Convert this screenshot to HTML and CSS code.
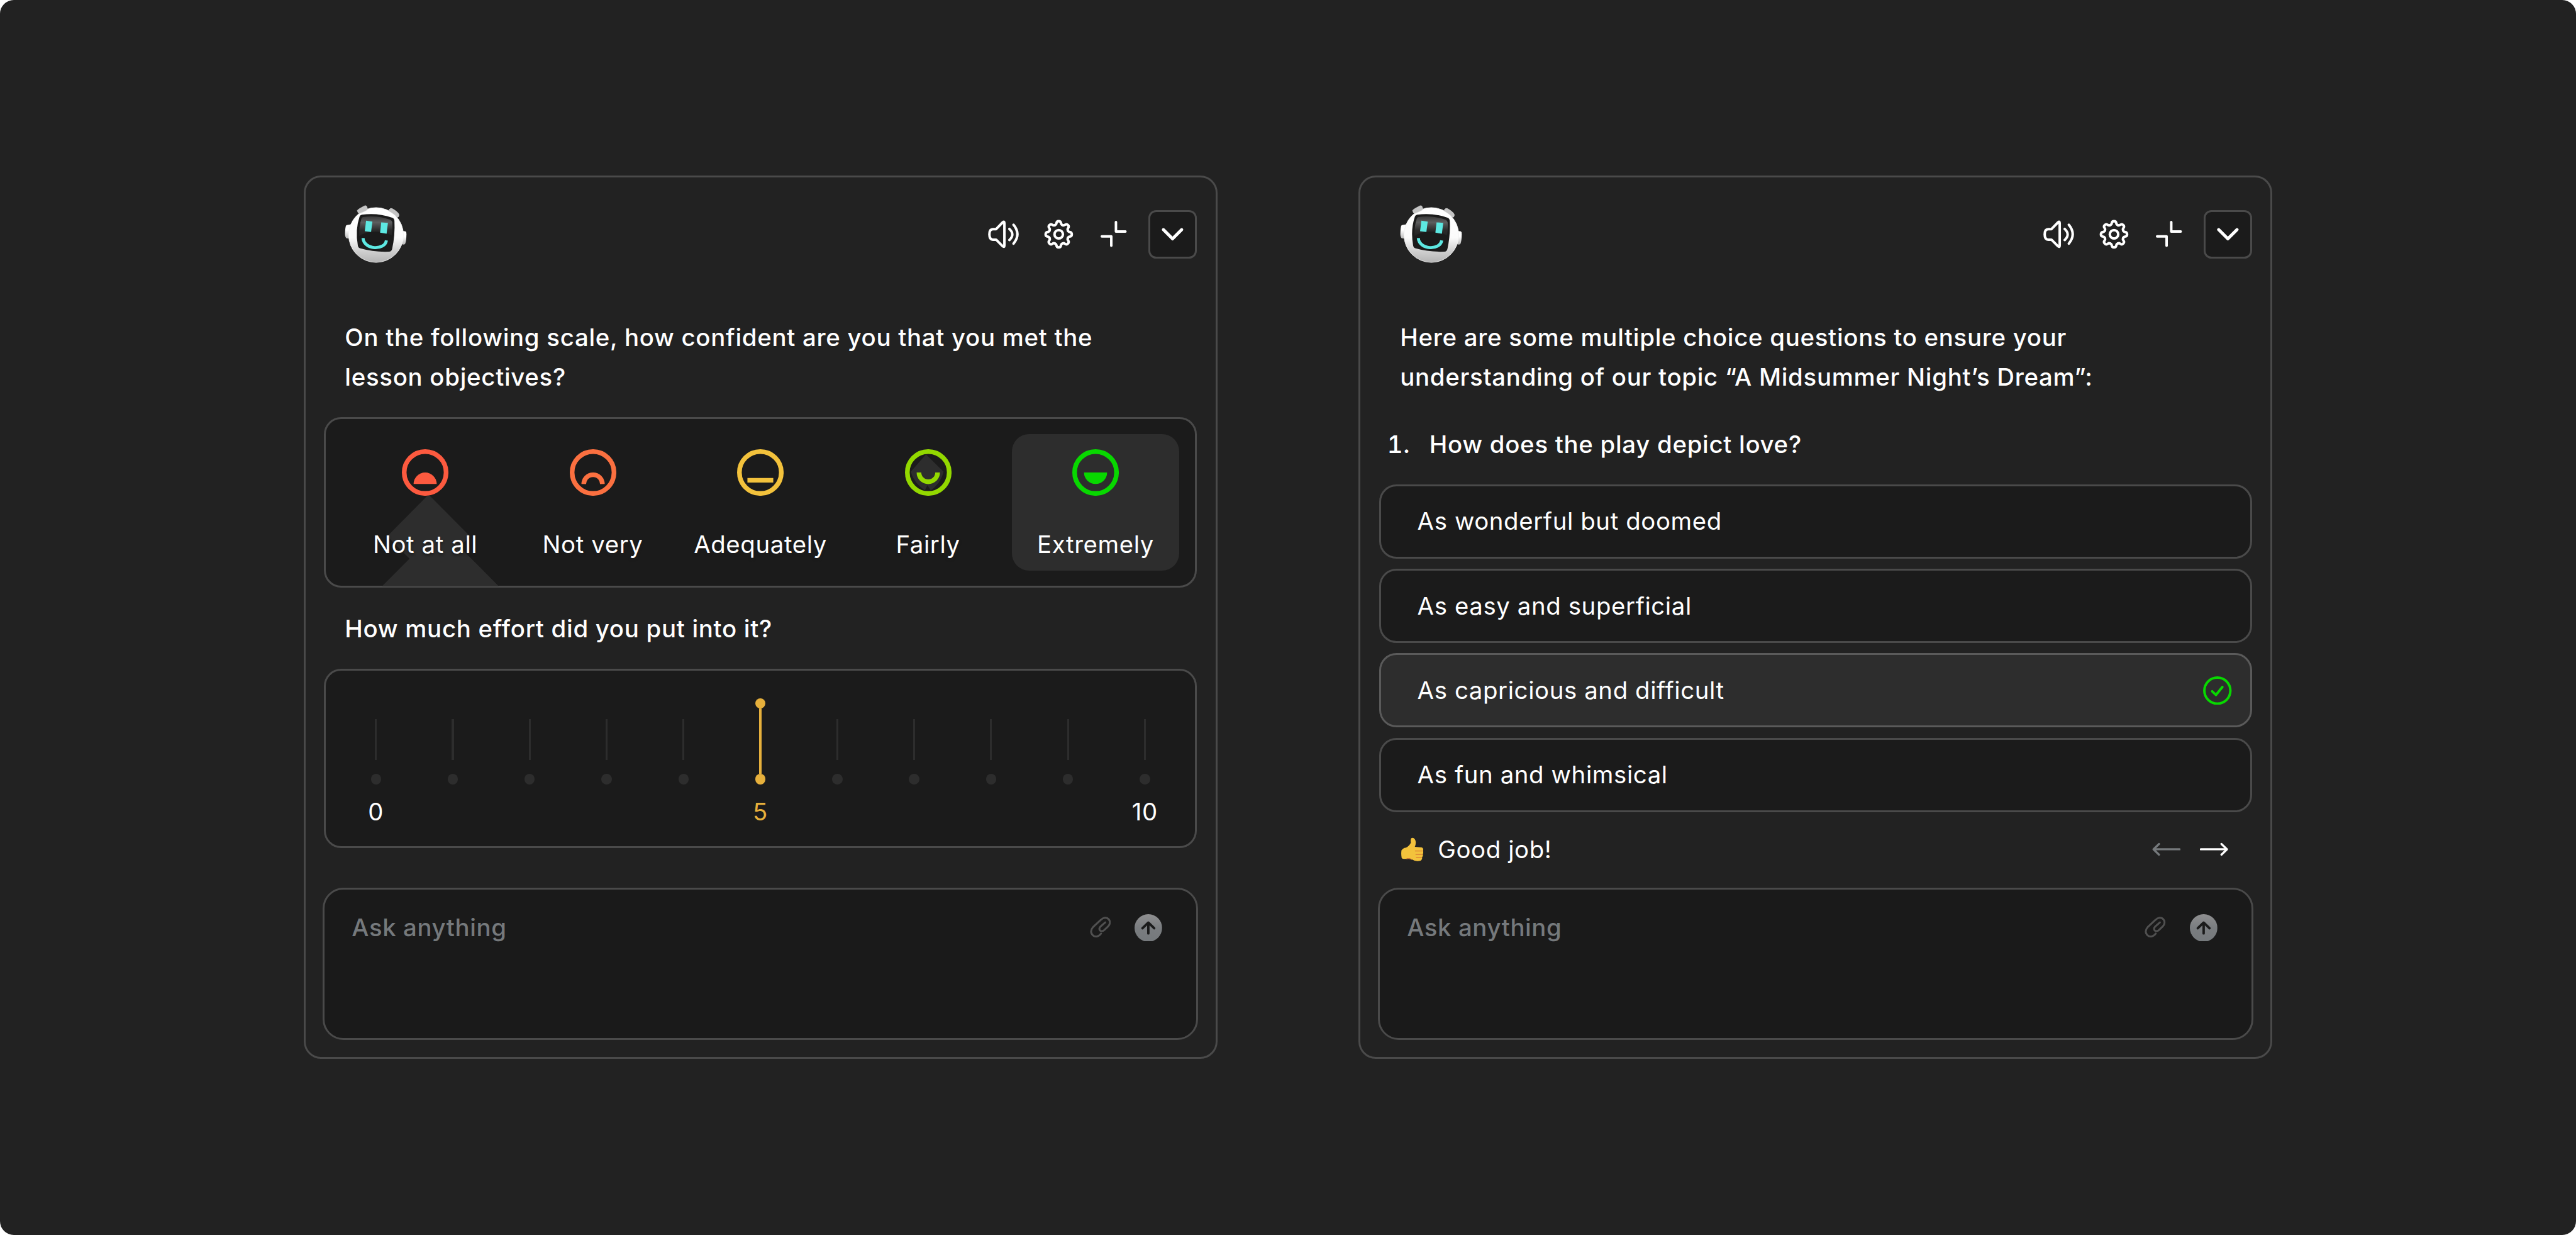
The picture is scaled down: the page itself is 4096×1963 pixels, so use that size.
FILE: index.html
```html
<!DOCTYPE html>
<html lang="en">
<head>
    <meta charset="UTF-8">
    <meta name="viewport" content="width=device-width, initial-scale=1.0">
    <title>Lesson Assistant</title>
    <link rel="stylesheet" href="styles.css">
</head>
<body>
    <!-- Shared icons -->
    <svg class="sprite" aria-hidden="true">
        <defs>
            <linearGradient id="headFill" x1="0" y1="0" x2="0" y2="1">
                <stop offset="0" stop-color="#ffffff"/>
                <stop offset="0.55" stop-color="#fbfbfb"/>
                <stop offset="0.8" stop-color="#cfcfcf"/>
                <stop offset="1" stop-color="#b4b4b4"/>
            </linearGradient>
            <linearGradient id="earFill" x1="0" y1="0" x2="0" y2="1">
                <stop offset="0.4" stop-color="#ffffff"/>
                <stop offset="1" stop-color="#b8b8b8"/>
            </linearGradient>
            <linearGradient id="visorFill" x1="0" y1="0" x2="0" y2="1">
                <stop offset="0" stop-color="#3a3a3a"/>
                <stop offset="0.3" stop-color="#5c5d5e"/>
                <stop offset="0.7" stop-color="#2b2b2b"/>
                <stop offset="1" stop-color="#222222"/>
            </linearGradient>
            <linearGradient id="sendFill" x1="0" y1="0" x2="0" y2="1">
                <stop offset="0" stop-color="#8f8f90"/>
                <stop offset="0.5" stop-color="#7a7d80"/>
                <stop offset="1" stop-color="#75797c"/>
            </linearGradient>
        </defs>
        <symbol id="robot" viewBox="30 38 324 302">
            <path d="M46 141 L66 138 L60 214 L40 211 Q33 208 32 190 Q33 150 38 144 Q41 141 46 141Z" fill="url(#earFill)"/>
            <path d="M326 172 L348 175 Q353 178 353 190 Q352 225 346 240 Q343 244 336 244 L320 240Z" fill="url(#earFill)"/>
            <circle cx="194" cy="194" r="143" fill="url(#headFill)" stroke="#f2f2f2" stroke-width="3"/>
            <path d="M96 66 Q98 60 134 42 Q142 38 146 46 L150 60 Q150 66 106 82 Q100 82 96 66Z" fill="#c4c4c4" stroke="#e4e4e4" stroke-width="2"/>
            <path d="M262 62 Q268 52 278 56 Q310 74 314 88 Q314 100 306 102 Q286 82 262 70Z" fill="#c4c4c4" stroke="#e4e4e4" stroke-width="2"/>
            <path d="M120 88 Q200 76 278 104 Q289 108 290 120 Q294 195 278 266 Q275 280 262 281 Q182 284 112 264 Q102 262 99 250 Q84 168 108 98 Q111 90 120 88Z" fill="#1b1b1b"/>
            <path d="M126 100 Q200 90 268 114 Q278 118 279 128 Q282 160 276 196 Q240 176 190 176 Q140 176 106 200 Q104 150 118 108 Q120 101 126 100Z" fill="url(#visorFill)"/>
            <path d="M142 119 L175 124 L168 178 L135 174Z M221 128 L256 131 L249 187 L215 182Z" fill="#5de8e2"/>
            <path d="M126 210 C130 272 240 277 248 222" fill="none" stroke="#5de8e2" stroke-width="16"/>
        </symbol>
        <symbol id="speaker" viewBox="0 0 20 20">
            <path d="M5.8 7 L9.6 3.1 Q10.6 2.2 10.6 3.6 V16.4 Q10.6 17.8 9.6 16.9 L5.8 13.1 H3.9 Q1.9 13.1 1.9 10 Q1.9 7 3.9 7Z"/>
            <path d="M13.5 6.9 Q16.9 10.1 13.5 13.3 M15.9 4.5 Q20.4 10 15.9 15.4"/>
        </symbol>
        <symbol id="gear" viewBox="-10 -10 20 20">
            <g id="toothPair">
                <path d="M-2.2 -5.31 C-1.6 -5.55 -1.4 -5.8 -1.35 -6.3 Q-1.2 -7.6 0 -7.6 Q1.2 -7.6 1.35 -6.3 C1.4 -5.8 1.6 -5.55 2.2 -5.31"/>
                <path transform="rotate(45)" d="M-2.2 -5.31 C-1.6 -5.55 -1.4 -5.8 -1.35 -6.3 Q-1.2 -7.6 0 -7.6 Q1.2 -7.6 1.35 -6.3 C1.4 -5.8 1.6 -5.55 2.2 -5.31"/>
            </g>
            <use href="#toothPair" transform="rotate(90)"/>
            <use href="#toothPair" transform="rotate(180)"/>
            <use href="#toothPair" transform="rotate(270)"/>
            <circle r="2.45"/>
        </symbol>
        <symbol id="collapse" viewBox="0 0 20 20">
            <path d="M11.1 2.9 V8.4 H16.6 M2.9 11.2 H8.4 V16.6"/>
        </symbol>
        <symbol id="chevron" viewBox="0 0 20 20">
            <path d="M4.7 7.3 L10 12.6 L15.3 7.3"/>
        </symbol>
        <symbol id="clip" viewBox="0 0 12.2 12.2">
            <path d="M6.5 9.8 C5 11.7 3 12 1.7 10.8 C0.3 9.5 0.4 7.5 1.8 6.1 L6.3 1.9 C7.8 0.4 9.7 0.3 10.8 1.4 C12 2.6 11.8 4.4 10.6 5.6 L8.3 7.8 C7.4 8.6 6.4 8.6 5.9 8 C5.3 7.4 5.4 6.5 6.1 5.8 L8.9 3.3"/>
        </symbol>
        <symbol id="send" viewBox="0 0 16 16">
            <circle cx="8" cy="8" r="8" fill="url(#sendFill)"/>
            <path d="M8 11.2 V4.9 M4.6 8.2 L8 4.9 L11.4 8.2" fill="none" stroke="#1b1b1b" stroke-width="1.4" stroke-linecap="round" stroke-linejoin="round"/>
        </symbol>
    </svg>

    <main class="stage">
        <!-- Self assessment -->
        <section class="panel">
            <header class="panel-header">
                <svg class="robot"><use href="#robot"/></svg>
                <div class="tools">
                    <svg class="icon"><use href="#speaker"/></svg>
                    <svg class="icon"><use href="#gear"/></svg>
                    <svg class="icon"><use href="#collapse"/></svg>
                    <button class="toggle"><svg class="icon"><use href="#chevron"/></svg></button>
                </div>
            </header>

            <p class="prompt">On the following scale, how confident are you that you met the<br>lesson objectives?</p>

            <div class="card rating">
                <svg class="rating-shade" viewBox="0 0 506 99">
                    <path d="M60.7 44.9 L84.8 69.1 L60.7 93.1 L36.7 69.1Z M67.6 64.1 L101.4 98 H33.7Z"/>
                    <path d="M349.2 21.6 L359.4 31.6 Q358 38 352 42.5 L350 39.5 L348.6 42.5 Q342 38 340.4 31.6Z"/>
                </svg>
                <div class="rate rate-1">
                    <svg class="face" viewBox="0 0 27 27"><circle cx="13.5" cy="13.5" r="12.15"/><path class="solid" d="M6.8 20.2 A6.7 6.7 0 0 1 20.2 20.2Z"/></svg>
                    <span>Not at all</span>
                </div>
                <div class="rate rate-2">
                    <svg class="face" viewBox="0 0 27 27"><circle cx="13.5" cy="13.5" r="12.15"/><path d="M8.1 20.2 A5.4 5.4 0 0 1 18.9 20.2"/></svg>
                    <span>Not very</span>
                </div>
                <div class="rate rate-3">
                    <svg class="face" viewBox="0 0 27 27"><circle cx="13.5" cy="13.5" r="12.15"/><path d="M6 18 H21"/></svg>
                    <span>Adequately</span>
                </div>
                <div class="rate rate-4">
                    <svg class="face" viewBox="0 0 27 27"><circle cx="13.5" cy="13.5" r="12.15"/><path d="M8.1 13.5 A5.4 5.4 0 0 0 18.9 13.5"/></svg>
                    <span>Fairly</span>
                </div>
                <div class="rate rate-5 selected">
                    <svg class="face" viewBox="0 0 27 27"><circle cx="13.5" cy="13.5" r="12.15"/><path class="solid" d="M6.8 13.5 A6.7 6.7 0 0 0 20.2 13.5Z"/></svg>
                    <span>Extremely</span>
                </div>
            </div>

            <p class="prompt effort-title">How much effort did you put into it?</p>

            <div class="card effort">
                <div class="step"><i class="tick"></i><i class="dot"></i><span>0</span></div>
                <div class="step"><i class="tick"></i><i class="dot"></i></div>
                <div class="step"><i class="tick"></i><i class="dot"></i></div>
                <div class="step"><i class="tick"></i><i class="dot"></i></div>
                <div class="step"><i class="tick"></i><i class="dot"></i></div>
                <div class="step active"><i class="dot"></i><i class="tick"></i><i class="dot"></i><span>5</span></div>
                <div class="step"><i class="tick"></i><i class="dot"></i></div>
                <div class="step"><i class="tick"></i><i class="dot"></i></div>
                <div class="step"><i class="tick"></i><i class="dot"></i></div>
                <div class="step"><i class="tick"></i><i class="dot"></i></div>
                <div class="step"><i class="tick"></i><i class="dot"></i><span>10</span></div>
            </div>

            <div class="composer">
                <span class="placeholder">Ask anything</span>
                <svg class="clip"><use href="#clip"/></svg>
                <svg class="send"><use href="#send"/></svg>
            </div>
        </section>

        <!-- Quiz -->
        <section class="panel">
            <header class="panel-header">
                <svg class="robot"><use href="#robot"/></svg>
                <div class="tools">
                    <svg class="icon"><use href="#speaker"/></svg>
                    <svg class="icon"><use href="#gear"/></svg>
                    <svg class="icon"><use href="#collapse"/></svg>
                    <button class="toggle"><svg class="icon"><use href="#chevron"/></svg></button>
                </div>
            </header>

            <p class="prompt">Here are some multiple choice questions to ensure your<br>understanding of our topic “A Midsummer Night’s Dream”:</p>

            <div class="question"><span class="number">1.</span><span>How does the play depict love?</span></div>

            <div class="options">
                <div class="option">As wonderful but doomed</div>
                <div class="option">As easy and superficial</div>
                <div class="option selected">
                    As capricious and difficult
                    <svg class="check" viewBox="0 0 16.6 16.6"><circle cx="8.3" cy="8.3" r="7.55"/><path d="M5.3 8.7 L7.5 10.8 L11.2 6.2"/></svg>
                </div>
                <div class="option">As fun and whimsical</div>
            </div>

            <div class="feedback">
                <svg class="thumb" viewBox="0 0 13 14">
                    <path d="M0.2 7.4 Q1.6 5.8 2.6 6 Q4.6 5.2 5.6 3.1 Q5.2 0.9 6 0.4 Q7.4 -0.1 8.2 1.6 Q8.8 3.4 7.9 5.5 L12 5.8 Q13.1 6.4 12.7 7.7 Q13.2 8.8 12.5 9.6 Q12.9 10.8 12.1 11.5 Q12.4 12.8 11.3 13.5 Q8.4 14.2 6.2 12.8 Q4.6 11.8 3 12.4 Q1 12.8 0.3 12 Q-0.2 9.6 0.2 7.4Z" fill="#f3c23c"/>
                    <path d="M8 7.9 H12.6 M8.3 9.9 H12.4 M8.6 11.8 H12 M3 12.5 Q4.7 11.9 6.2 12.9" fill="none" stroke="#d97a34" stroke-width="0.4"/>
                </svg>
                <span>Good job!</span>
                <div class="pager">
                    <svg class="arrow prev" viewBox="0 0 16.5 8"><path d="M16 4 H0.9 M4 0.9 L0.8 4 L4 7.1"/></svg>
                    <svg class="arrow" viewBox="0 0 16.5 8"><path d="M0.5 4 H15.6 M12.5 0.9 L15.7 4 L12.5 7.1"/></svg>
                </div>
            </div>

            <div class="composer">
                <span class="placeholder">Ask anything</span>
                <svg class="clip"><use href="#clip"/></svg>
                <svg class="send"><use href="#send"/></svg>
            </div>
        </section>
    </main>
</body>
</html>
```
FILE: styles.css
```css
/* 1rem = 10 units of the 1494 x 716 layout */
html {
    font-size: calc(100vw / 149.4);
    background-color: #ffffff;
}

* {
    box-sizing: border-box;
}

body {
    margin: 0;
    font-family: Inter, "Liberation Sans", sans-serif;
    font-size: 1.4rem;
    line-height: 2.3rem;
    letter-spacing: 0.022rem;
    color: #ffffff;
    overflow: hidden;
}

.sprite {
    position: absolute;
    width: 0;
    height: 0;
}

.stage {
    display: flex;
    justify-content: center;
    gap: 8.2rem;
    height: 100vh;
    padding-top: 10.18rem;
    border-radius: 0.8rem;
    background-color: #222222;
}

/* Panel */
.panel {
    display: flex;
    flex-direction: column;
    width: 53rem;
    height: 51.2rem;
    padding: 1.59rem 0.99rem 0.99rem;
    border: 0.11rem solid #4a4a4a;
    border-radius: 1rem;
}

.panel-header {
    display: flex;
    align-items: center;
    justify-content: space-between;
    height: 3.4rem;
    padding: 0 0.1rem 0 1.3rem;
}

.robot {
    width: 3.6rem;
    height: 3.356rem;
}

.tools {
    display: flex;
    align-items: center;
    gap: 1.2rem;
}

.icon {
    display: block;
    width: 2rem;
    height: 2rem;
    fill: none;
    stroke: #ffffff;
    stroke-width: 1.45;
    stroke-linecap: round;
    stroke-linejoin: round;
}

.toggle {
    display: flex;
    align-items: center;
    justify-content: center;
    width: 2.8rem;
    height: 2.8rem;
    margin-left: -0.2rem;
    padding: 0;
    border: 0.11rem solid #4a4a4a;
    border-radius: 0.45rem;
    background-color: #1b1b1b;
}

.toggle .icon {
    stroke-width: 1.8;
    flex-shrink: 0;
}

/* Texts */
.prompt {
    margin: 3.14rem 0 1.16rem;
    padding-left: 1.3rem;
    font-weight: 500;
    letter-spacing: 0.026rem;
    white-space: nowrap;
}

.effort-title {
    margin-top: 1.24rem;
}

.card {
    margin: 0 0.1rem;
    border: 0.11rem solid #4a4a4a;
    border-radius: 1rem;
    background-color: #1b1b1b;
}

/* Rating */
.rating {
    position: relative;
    display: grid;
    grid-template-columns: repeat(5, 1fr);
    height: 9.9rem;
    padding: 0.89rem;
}

.rating-shade {
    position: absolute;
    left: -0.11rem;
    top: -0.11rem;
    width: 50.6rem;
    height: 9.9rem;
    fill: #2d2d2d;
}

.rate {
    position: relative;
    display: flex;
    flex-direction: column;
    align-items: center;
    gap: 1.69rem;
    padding-top: 0.85rem;
    border-radius: 1rem;
    text-shadow: 0 0.12rem 0.14rem #1b1b1b;
}

.rate.selected {
    background-color: #2d2d2d;
    text-shadow: none;
}

.face {
    width: 2.7rem;
    height: 2.7rem;
    fill: none;
    stroke: currentColor;
    stroke-width: 2.7;
}

.face .solid {
    fill: currentColor;
    stroke: none;
}

.rate-1 .face { color: #fd5a3f; }
.rate-2 .face { color: #fb7040; }
.rate-3 .face { color: #f3c23c; }
.rate-4 .face { color: #93d800; }
.rate-5 .face { color: #08d800; }

/* Effort scale */
.effort {
    display: grid;
    grid-template-columns: repeat(11, 4.46rem);
    justify-content: center;
    height: 10.4rem;
    padding-top: 2.79rem;
}

.step {
    display: flex;
    flex-direction: column;
    align-items: center;
}

.tick {
    width: 0.11rem;
    height: 2.4rem;
    background-color: #2d2d2d;
}

.dot {
    width: 0.6rem;
    height: 0.6rem;
    margin-top: 0.8rem;
    border-radius: 50%;
    background-color: #2d2d2d;
}

.step span {
    margin-top: 0.43rem;
}

.step.active {
    margin-top: -1.2rem;
    color: #e6b03c;
}

.active .tick {
    width: 0.14rem;
    height: 3.8rem;
    background-color: #e6b03c;
}

.active .dot {
    margin-top: 0;
    background-color: #e6b03c;
}

/* Quiz */
.question {
    display: flex;
    margin: 0.43rem 0 1.17rem;
    padding-left: 0.55rem;
    font-weight: 500;
    letter-spacing: 0.026rem;
}

.number {
    width: 2.45rem;
    font-variant-numeric: tabular-nums;
}

.options {
    display: flex;
    flex-direction: column;
    gap: 0.6rem;
    margin: 0 0.1rem;
}

.option {
    display: flex;
    align-items: center;
    justify-content: space-between;
    height: 4.3rem;
    padding: 0 1.06rem 0 2.09rem;
    border: 0.11rem solid #4a4a4a;
    border-radius: 1rem;
    background-color: #1b1b1b;
}

.option.selected {
    border-color: #5a5a5a;
    background-color: #2d2d2d;
}

.check {
    width: 1.66rem;
    height: 1.66rem;
    fill: none;
    stroke: #08d800;
    stroke-width: 1.45;
    stroke-linecap: round;
    stroke-linejoin: round;
}

.feedback {
    display: flex;
    align-items: center;
    gap: 0.84rem;
    margin-top: 1.03rem;
    padding: 0 1.45rem 0 1.35rem;
}

.thumb {
    width: 1.3rem;
    height: 1.4rem;
}

.pager {
    display: flex;
    gap: 1.15rem;
    margin-left: auto;
}

.arrow {
    width: 1.65rem;
    height: 0.8rem;
    fill: none;
    stroke: #ffffff;
    stroke-width: 1.2;
    stroke-linecap: round;
    stroke-linejoin: round;
}

.arrow.prev {
    stroke: #75797c;
}

/* Composer */
.composer {
    display: flex;
    align-items: flex-start;
    height: 8.8rem;
    margin-top: auto;
    padding: 1.04rem 1.99rem 0 1.59rem;
    border: 0.11rem solid #4a4a4a;
    border-radius: 1.2rem;
    background-color: #1a1a1a;
}

.placeholder {
    flex: 1;
    font-weight: 500;
    color: #75797c;
}

.clip {
    width: 1.22rem;
    height: 1.22rem;
    margin: 0.53rem 1.39rem 0 0;
    fill: none;
    stroke: #505050;
    stroke-width: 1.1;
    stroke-linecap: round;
    stroke-linejoin: round;
}

.send {
    width: 1.6rem;
    height: 1.6rem;
    margin-top: 0.35rem;
}
```
